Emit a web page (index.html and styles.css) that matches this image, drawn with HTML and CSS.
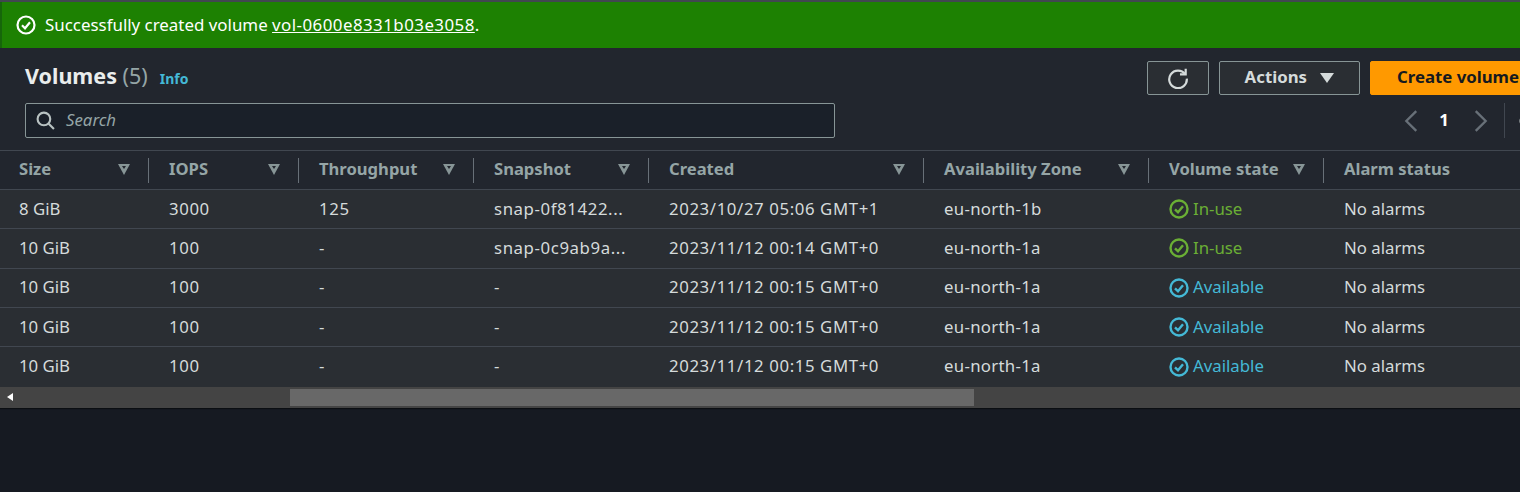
FILE: index.html
```html
<!doctype html>
<html lang="en">
<head>
    <meta charset="UTF-8">
    <title>Volumes</title>
    <link rel="stylesheet" href="styles.css">
</head>
<body>
<div class="flash">
    <svg class="flash-icon" viewBox="0 0 20 20"><circle cx="10" cy="10" r="8.500"/><path d="M6 10.300l3 3 5-6"/></svg>
    <span>Successfully created volume <a href="#">vol-0600e8331b03e3058</a>.</span>
</div>
<div class="card">
    <div class="toolbar">
        <div class="toolbar-row">
            <div class="title-block">
                <h1 class="title">Volumes <span class="count">(5)</span></h1>
                <a class="info" href="#">Info</a>
            </div>
            <div class="actions">
                <button class="btn btn-icon">
                    <svg viewBox="0 0 20 20"><path d="M16.500 6.500A8 8 0 1 0 18 10.500"/><path d="M17 1.500v5.200h-5.200"/></svg>
                </button>
                <button class="btn btn-actions">Actions <i class="caret"></i></button>
                <button class="btn btn-primary">Create volume</button>
            </div>
        </div>
        <div class="toolbar-row search-row">
            <div class="search">
                <svg viewBox="0 0 18 18"><circle cx="7.500" cy="7.500" r="6"/><path d="M12 12l5 5"/></svg>
                <span>Search</span>
            </div>
            <div class="pager">
                <svg viewBox="0 0 12 20"><path d="M10.500 1.500L2 10l8.500 8.500"/></svg>
                <b>1</b>
                <svg viewBox="0 0 12 20"><path d="M1.500 1.500L10 10l-8.500 8.500"/></svg>
                <span class="pager-line"></span>
                <svg class="gear" viewBox="0 0 16 16"><circle cx="8" cy="8" r="5.500"/></svg>
            </div>
        </div>
    </div>
    <table class="volumes">
        <colgroup>
            <col class="col-s"><col class="col-s"><col class="col-m"><col class="col-m"><col class="col-l"><col class="col-xl"><col class="col-m"><col class="col-last">
        </colgroup>
        <thead>
            <tr>
                <th><div>Size<i class="sort"></i></div></th>
                <th><div>IOPS<i class="sort"></i></div></th>
                <th><div>Throughput<i class="sort"></i></div></th>
                <th><div>Snapshot<i class="sort"></i></div></th>
                <th><div>Created<i class="sort"></i></div></th>
                <th><div>Availability Zone<i class="sort"></i></div></th>
                <th><div>Volume state<i class="sort"></i></div></th>
                <th><div>Alarm status</div></th>
            </tr>
        </thead>
        <tbody>
            <tr>
                <td>8 GiB</td><td class="num">3000</td><td class="num">125</td><td class="num">snap-0f81422...</td>
                <td class="num">2023/10/27 05:06 GMT+1</td><td class="zone">eu-north-1b</td>
                <td><span class="state in-use"><svg viewBox="0 0 20 20"><circle cx="10" cy="10" r="8.500"/><path d="M6 10.300l3 3 5-6"/></svg>In-use</span></td>
                <td>No alarms</td>
            </tr>
            <tr>
                <td>10 GiB</td><td class="num">100</td><td>-</td><td class="num">snap-0c9ab9a...</td>
                <td class="num">2023/11/12 00:14 GMT+0</td><td class="zone">eu-north-1a</td>
                <td><span class="state in-use"><svg viewBox="0 0 20 20"><circle cx="10" cy="10" r="8.500"/><path d="M6 10.300l3 3 5-6"/></svg>In-use</span></td>
                <td>No alarms</td>
            </tr>
            <tr>
                <td>10 GiB</td><td class="num">100</td><td>-</td><td>-</td>
                <td class="num">2023/11/12 00:15 GMT+0</td><td class="zone">eu-north-1a</td>
                <td><span class="state available"><svg viewBox="0 0 20 20"><circle cx="10" cy="10" r="8.500"/><path d="M6 10.300l3 3 5-6"/></svg>Available</span></td>
                <td>No alarms</td>
            </tr>
            <tr>
                <td>10 GiB</td><td class="num">100</td><td>-</td><td>-</td>
                <td class="num">2023/11/12 00:15 GMT+0</td><td class="zone">eu-north-1a</td>
                <td><span class="state available"><svg viewBox="0 0 20 20"><circle cx="10" cy="10" r="8.500"/><path d="M6 10.300l3 3 5-6"/></svg>Available</span></td>
                <td>No alarms</td>
            </tr>
            <tr>
                <td>10 GiB</td><td class="num">100</td><td>-</td><td>-</td>
                <td class="num">2023/11/12 00:15 GMT+0</td><td class="zone">eu-north-1a</td>
                <td><span class="state available"><svg viewBox="0 0 20 20"><circle cx="10" cy="10" r="8.500"/><path d="M6 10.300l3 3 5-6"/></svg>Available</span></td>
                <td>No alarms</td>
            </tr>
        </tbody>
    </table>
    <div class="scrollbar">
        <i class="scroll-arrow"></i>
        <div class="scroll-thumb"></div>
    </div>
</div>
</body>
</html>
```

FILE: styles.css
```css
html, body {
    height: 100%;
}
body {
    margin: 0;
    overflow: hidden;
    background-color: #161a22;
    color: #d5dbdb;
    font-family: "Noto Sans", sans-serif;
    font-size: 16.800px;
    border-top: 2px solid #414750;
}
.flash {
    display: flex;
    align-items: center;
    gap: 9px;
    height: 46px;
    padding-left: 14px;
    background-color: #1d8102;
    color: #fff;
    font-size: 16.900px;
    box-shadow: 0 1px 1px #0b0e12;
    border-left: 2px solid #16660a;
    box-sizing: border-box;
}
.flash span {
    margin-top: -2px;
}
.flash a {
    color: #fff;
    letter-spacing: 0.450px;
}
.flash-icon {
    width: 20px;
    height: 20px;
    fill: none;
    stroke: #fff;
    stroke-width: 2.200;
}
.card {
    width: 1600px;
    background-color: #22262e;
}
.toolbar {
    padding: 13px 0 12px 25px;
    border-bottom: 1px solid #414750;
}
.toolbar-row {
    display: flex;
    align-items: center;
}
.title-block {
    display: flex;
    align-items: baseline;
    width: 1122px;
    margin-top: -4px;
}
.title {
    margin: 0;
    font-size: 21.500px;
    font-weight: 700;
    line-height: 30px;
    color: #eaeded;
}
.count {
    font-weight: 400;
    color: #95a5a6;
}
.info {
    margin-left: 12px;
    font-size: 14px;
    font-weight: 700;
    color: #44b9d6;
    text-decoration: none;
}
.actions {
    display: flex;
    gap: 10px;
}
.btn {
    height: 34px;
    box-sizing: border-box;
    border: 1px solid #879596;
    border-radius: 2px;
    background-color: #2a2e33;
    color: #d5dbdb;
    font: 700 16.800px "Noto Sans", sans-serif;
    padding: 0 0 4px;
}
.btn-icon {
    width: 62px;
    display: flex;
    align-items: center;
    justify-content: center;
    padding: 0;
}
.btn-icon svg {
    width: 22px;
    height: 22px;
    fill: none;
    stroke: #d5dbdb;
    stroke-width: 2;
}
.btn-actions {
    width: 141px;
}
.caret {
    display: inline-block;
    margin-left: 9px;
    border-left: 7px solid transparent;
    border-right: 7px solid transparent;
    border-top: 10px solid #d5dbdb;
}
.btn-primary {
    width: 176px;
    border-color: #ff9900;
    background-color: #ff9900;
    color: #16191f;
}
.search-row {
    margin-top: 8px;
}
.search {
    display: flex;
    align-items: center;
    gap: 11px;
    width: 810px;
    height: 35px;
    box-sizing: border-box;
    padding: 0 0 1px 10px;
    border: 1px solid #879596;
    border-radius: 2px;
    background-color: #1a2029;
    font-style: italic;
    color: #95a5a6;
}
.search span {
    margin-top: -2px;
}
.search svg {
    width: 19px;
    height: 19px;
    fill: none;
    stroke: #b8c2c2;
    stroke-width: 2;
}
.pager {
    display: flex;
    align-items: center;
    margin-left: 569px;
}
.pager svg {
    width: 14px;
    height: 24px;
    fill: none;
    stroke: #687078;
    stroke-width: 2;
}
.pager b {
    width: 52px;
    padding-right: 4px;
    margin-top: -2px;
    text-align: center;
    color: #fff;
}
.pager-line {
    width: 1px;
    height: 35px;
    margin: 0 13px 0 16px;
    background-color: #414750;
}
.pager .gear {
    width: 16px;
    stroke: #d5dbdb;
}
.volumes {
    table-layout: fixed;
    border-collapse: collapse;
    width: 1520px;
}
.col-s {
    width: 150px;
}
.col-m {
    width: 175px;
}
.col-l {
    width: 275px;
}
.col-xl {
    width: 225px;
}
.col-last {
    width: 195px;
}
th {
    height: 38px;
    padding: 0;
    text-align: left;
    font-size: 16.600px;
    font-weight: 700;
    color: #95a5a6;
}
th > div {
    display: flex;
    align-items: center;
    justify-content: space-between;
    height: 25px;
    padding: 0 18px 4px 19px;
    box-sizing: border-box;
    border-right: 1px solid #687078;
    margin-right: 1px;
}
th:last-child > div {
    border-right: 0;
}
.sort {
    position: relative;
    margin-top: 3px;
    border-left: 6.500px solid transparent;
    border-right: 6.500px solid transparent;
    border-top: 11px solid #879596;
}
.sort::after {
    content: '';
    position: absolute;
    left: -2px;
    top: -9px;
    border-left: 2px solid transparent;
    border-right: 2px solid transparent;
    border-top: 3px solid #22262e;
}
td {
    height: 39.330px;
    padding: 0 0 2px 19px;
    box-sizing: border-box;
    border-top: 1px solid #414750;
    background-color: #2a2e33;
    color: #d5dbdb;
    white-space: nowrap;
    overflow: hidden;
}
.volumes tbody tr:last-child td {
    height: 39.700px;
}
.num {
    letter-spacing: 0.600px;
}
.zone {
    letter-spacing: 0.300px;
}
.state {
    display: flex;
    align-items: center;
    gap: 4px;
}
.state svg {
    width: 20px;
    height: 20px;
    margin-top: 2px;
    fill: none;
    stroke: currentColor;
    stroke-width: 2.400;
}
.in-use {
    color: #6aaf35;
}
.available {
    color: #44b9d6;
}
.scrollbar {
    display: flex;
    align-items: center;
    position: relative;
    width: 1520px;
    height: 21px;
    background-color: #444;
    box-shadow: 0 1px 1px #0b0e12;
}
.scroll-arrow {
    position: absolute;
    left: 7px;
    top: 6px;
    border-top: 4.500px solid transparent;
    border-bottom: 4.500px solid transparent;
    border-right: 6px solid #fff;
}
.scroll-thumb {
    width: 684px;
    height: 17px;
    margin-left: 290px;
    background-color: #686868;
}
```
